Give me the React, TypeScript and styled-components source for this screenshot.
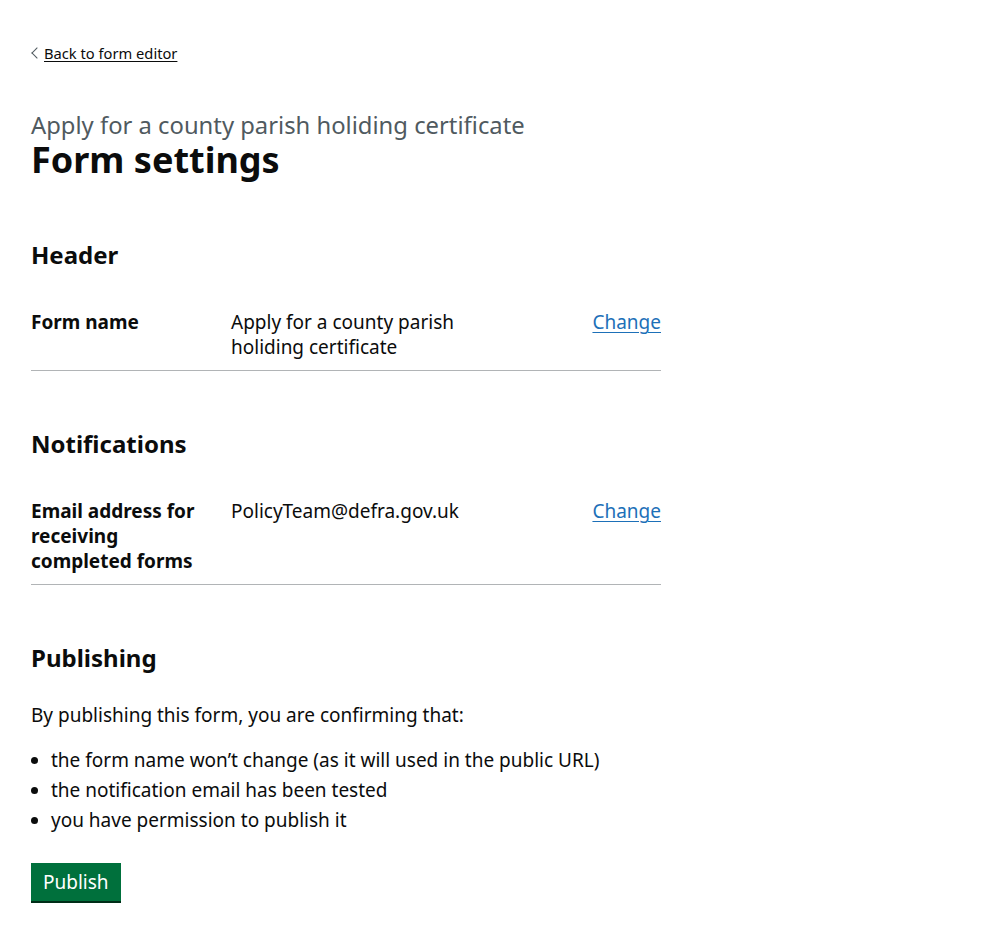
import * as React from "react"
import styled, { createGlobalStyle } from "styled-components"

const TEXT = "#0b0c0c"
const SECONDARY = "#505a5f"
const LINK = "#1d70b8"
const BORDER = "#b1b4b6"
const GREEN = "#00703c"

const GlobalStyle = createGlobalStyle`
  html, body {
    margin: 0;
    padding: 0;
    background: #ffffff;
  }
  body {
    font-family: "Noto Sans", "Open Sans", Arial, sans-serif;
    color: ${TEXT};
    -webkit-font-smoothing: antialiased;
  }
`

const Page = styled.div`
  padding: 43px 30px 40px 31px;
`

const BackRow = styled.div`
  display: flex;
  margin-bottom: 47px;
`

const BackLink = styled.a`
  position: relative;
  padding-left: 13px;
  font-size: 14.7px;
  line-height: 20px;
  color: ${TEXT};
  text-decoration: underline;
  text-decoration-thickness: 1px;
  text-underline-offset: 0.1578em;
  cursor: pointer;

  &::before {
    content: "";
    position: absolute;
    top: 0;
    bottom: 0;
    left: 2px;
    width: 7px;
    height: 7px;
    margin: auto 0;
    border-style: solid;
    border-color: ${SECONDARY};
    border-width: 1px 1px 0 0;
    transform: rotate(225deg);
  }
`

const Caption = styled.span`
  display: block;
  font-size: 23.8px;
  line-height: 30px;
  color: ${SECONDARY};
`

const Title = styled.h1`
  margin: 0 0 30px;
  font-size: 36px;
  line-height: 40px;
  font-weight: 700;
`

const Column = styled.div`
  max-width: 630px;
`

const Section = styled.section`
  padding-top: 30px;
`

const SectionHeading = styled.h2`
  margin: 0 0 30px;
  font-size: 24px;
  line-height: 30px;
  font-weight: 700;
`

const SummaryList = styled.dl`
  margin: 0 0 28px;
  font-size: 19px;
  line-height: 25px;
`

const SummaryRow = styled.div`
  display: grid;
  grid-template-columns: 200px 315px 1fr;
  border-bottom: 1px solid ${BORDER};
`

const Key = styled.dt`
  padding: 10px 20px 10px 0;
  font-weight: 700;
`

const Value = styled.dd`
  margin: 0;
  padding: 10px 20px 10px 0;
`

const Actions = styled.dd`
  margin: 0;
  padding: 10px 0;
  text-align: right;
`

const Link = styled.a`
  color: ${LINK};
  text-decoration: underline;
  text-decoration-thickness: 1px;
  text-underline-offset: 0.1578em;
  cursor: pointer;
`

const Body = styled.p`
  margin: 0 0 20px;
  font-size: 19px;
  line-height: 25px;
`

const BulletList = styled.ul`
  margin: 0 0 30px;
  padding-left: 20px;
  list-style-type: disc;
  font-size: 19px;
  line-height: 25px;
`

const Bullet = styled.li`
  margin-bottom: 5px;
`

const Button = styled.button`
  display: inline-block;
  margin: 0;
  padding: 8px 10px 7px;
  border: 2px solid transparent;
  border-radius: 0;
  background: ${GREEN};
  box-shadow: 0 2px 0 #002d18;
  color: #ffffff;
  font-family: inherit;
  font-size: 19px;
  line-height: 1;
  font-weight: 400;
  cursor: pointer;
`

type Row = { key: string; value: string }

const headerRows: Row[] = [
  { key: "Form name", value: "Apply for a county parish holiding certificate" },
]

const notificationRows: Row[] = [
  {
    key: "Email address for receiving completed forms",
    value: "PolicyTeam@defra.gov.uk",
  },
]

const conditions = [
  "the form name won\u2019t change (as it will used in the public URL)",
  "the notification email has been tested",
  "you have permission to publish it",
]

function Summary({ rows }: { rows: Row[] }) {
  return (
    <SummaryList>
      {rows.map(row => (
        <SummaryRow key={row.key}>
          <Key>{row.key}</Key>
          <Value>{row.value}</Value>
          <Actions>
            <Link>Change</Link>
          </Actions>
        </SummaryRow>
      ))}
    </SummaryList>
  )
}

export default function App() {
  return (
    <>
      <GlobalStyle />
      <Page>
        <BackRow>
          <BackLink>Back to form editor</BackLink>
        </BackRow>
        <Caption>Apply for a county parish holiding certificate</Caption>
        <Title>Form settings</Title>
        <Column>
          <Section>
            <SectionHeading>Header</SectionHeading>
            <Summary rows={headerRows} />
          </Section>

          <Section>
            <SectionHeading>Notifications</SectionHeading>
            <Summary rows={notificationRows} />
          </Section>

          <Section>
            <SectionHeading>Publishing</SectionHeading>
            <Body>By publishing this form, you are confirming that:</Body>
            <BulletList>
              {conditions.map(c => (
                <Bullet key={c}>{c}</Bullet>
              ))}
            </BulletList>
            <Button>Publish</Button>
          </Section>
        </Column>
      </Page>
    </>
  )
}
